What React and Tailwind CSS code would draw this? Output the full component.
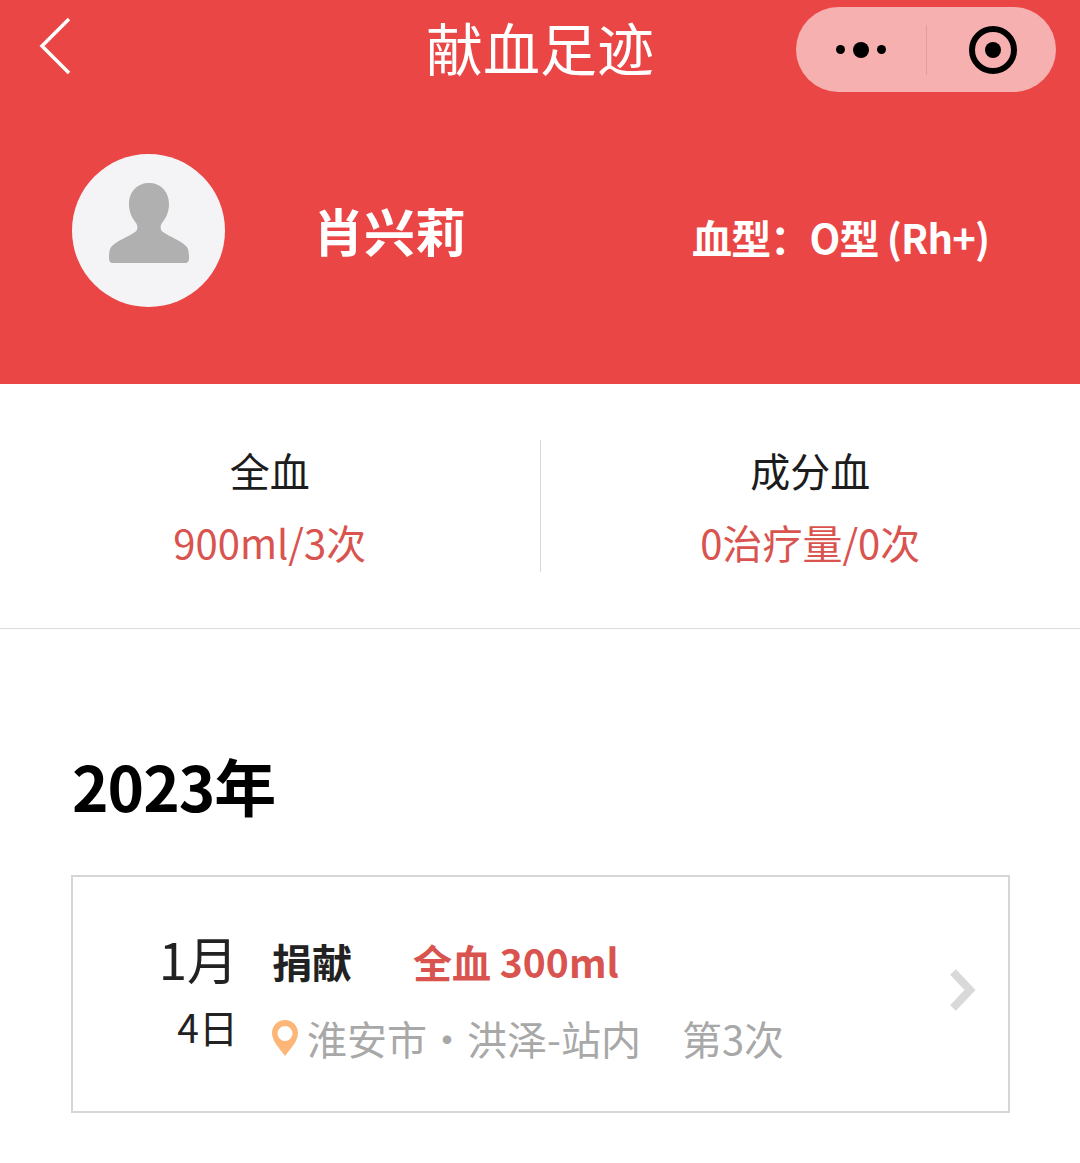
const Capsule = () => (
	<div className="w-[260px] h-[85px] rounded-full bg-[#f6b0b0] flex items-center">
		<div className="w-[130px] flex items-center justify-center gap-[8px]">
			<span className="w-[9px] h-[9px] rounded-full bg-black" />
			<span className="w-[16px] h-[16px] rounded-full bg-black" />
			<span className="w-[9px] h-[9px] rounded-full bg-black" />
		</div>
		<div className="w-px h-[50px] bg-[#e59c9c]" />
		<div className="flex-1 flex items-center justify-center pl-[2px]">
			<div className="w-[48px] h-[48px] rounded-full border-[6px] border-black flex items-center justify-center">
				<span className="w-[16px] h-[16px] rounded-full bg-black" />
			</div>
		</div>
	</div>
);

const AvatarIcon = () => (
	<svg width="80" height="80" viewBox="0 0 80 80" className="mb-[15px]">
		<path
			d="M40 0c11 0 20 8 20 21 0 8-3 14-7 19-2 3-2 7 1 9 7 5 17 8 23 14 2 2 3 5 3 12 0 3-1 5-4 5H4c-3 0-4-2-4-5 0-7 1-10 3-12 6-6 16-9 23-14 3-2 3-6 1-9-4-5-7-11-7-19C20 8 29 0 40 0z"
			fill="#b0b0b0"
		/>
	</svg>
);

const Stat = ({ label, value }) => (
	<div className="flex-1 flex flex-col items-center">
		<p className="text-[40px] leading-[64px] text-[#1c1c1c] mt-[-2px]">{label}</p>
		<p className="text-[40px] leading-[64px] text-[#d9534f] mt-[8px]">{value}</p>
	</div>
);

const DonationCard = () => (
	<div className="ml-[71px] w-[939px] h-[238px] border-2 border-[#d6d6d6] flex items-start relative">
		<div className="w-[165px] flex flex-col items-end pt-[49px] text-[#222]">
			<p className="text-[51px] leading-[64px]">1月</p>
			<p className="text-[39px] leading-[56px] mt-[8px]">4日</p>
		</div>
		<div className="ml-[33px] pt-[56px]">
			<div className="flex items-center h-[56px]">
				<span className="text-[40px] font-bold text-[#222] w-[142px] pl-[1px]">捐献</span>
				<span className="text-[39px] font-bold text-[#d9534f]">全血 300ml</span>
			</div>
			<div className="flex items-center h-[56px] mt-[21px] text-[40px] text-[#a8a8a8]">
				<svg width="28" height="38" viewBox="0 0 28 38" className="mr-[8px] shrink-0">
					<path
						d="M14 1C6.800 1 1 6.800 1 14c0 8 7 15 13 23 6-8 13-15 13-23C27 6.800 21.200 1 14 1zm0 6a7.500 7.500 0 1 1 0 15 7.500 7.500 0 0 1 0-15z"
						fill="#fcb678"
						fillRule="evenodd"
					/>
				</svg>
				<span className="whitespace-nowrap">淮安市・洪泽-站内</span>
				<span className="ml-[41px] whitespace-nowrap">第3次</span>
			</div>
		</div>
		<svg width="28" height="44" viewBox="0 0 28 44" className="absolute right-[32px] top-[91px]">
			<path d="M5 4l17 18L5 40" fill="none" stroke="#d9d9d9" strokeWidth="8" />
		</svg>
	</div>
);

export default function App() {
	return (
		<div className="w-[1080px] h-[1163px] bg-white overflow-hidden font-['Noto_Sans_CJK_SC','Noto_Sans',sans-serif]">
			<header className="bg-[#eb4646] h-[384px]">
				<div className="h-[100px] pt-[7px] pl-[38px] pr-[24px] flex items-start justify-between relative">
					<svg width="34" height="60" viewBox="0 0 34 60" className="mt-[9px]">
						<path d="M31 3L4 30l27 27" fill="none" stroke="#fff" strokeWidth="3.500" />
					</svg>
					<h1 className="absolute left-0 right-0 top-[8px] text-center text-[57px] leading-[76px] text-white">献血足迹</h1>
					<Capsule />
				</div>
				<div className="flex items-center pl-[72px] pt-[54px]">
					<div className="w-[153px] h-[153px] rounded-full bg-[#f4f4f6] flex items-center justify-center shrink-0">
						<AvatarIcon />
					</div>
					<p className="ml-[88px] w-[379px] text-[51px] leading-[70px] font-bold text-white mb-[2px]">肖兴莉</p>
					<p className="text-[40px] leading-[56px] font-semibold text-white whitespace-nowrap mt-[12px] tracking-[-0.85px]">血型：O型 (Rh+)</p>
				</div>
			</header>

			<section className="h-[245px] border-b border-[#dcdcdc] flex items-start pt-[56px]">
				<Stat label="全血" value="900ml/3次" />
				<div className="w-px h-[132px] bg-[#d8d8d8]" />
				<Stat label="成分血" value="0治疗量/0次" />
			</section>

			<h2 className="ml-[72px] mt-[110px] text-[62px] leading-[92px] font-bold text-black tracking-[-1px]">2023年</h2>
			<div className="mt-[44px]">
				<DonationCard />
			</div>
		</div>
	);
}
